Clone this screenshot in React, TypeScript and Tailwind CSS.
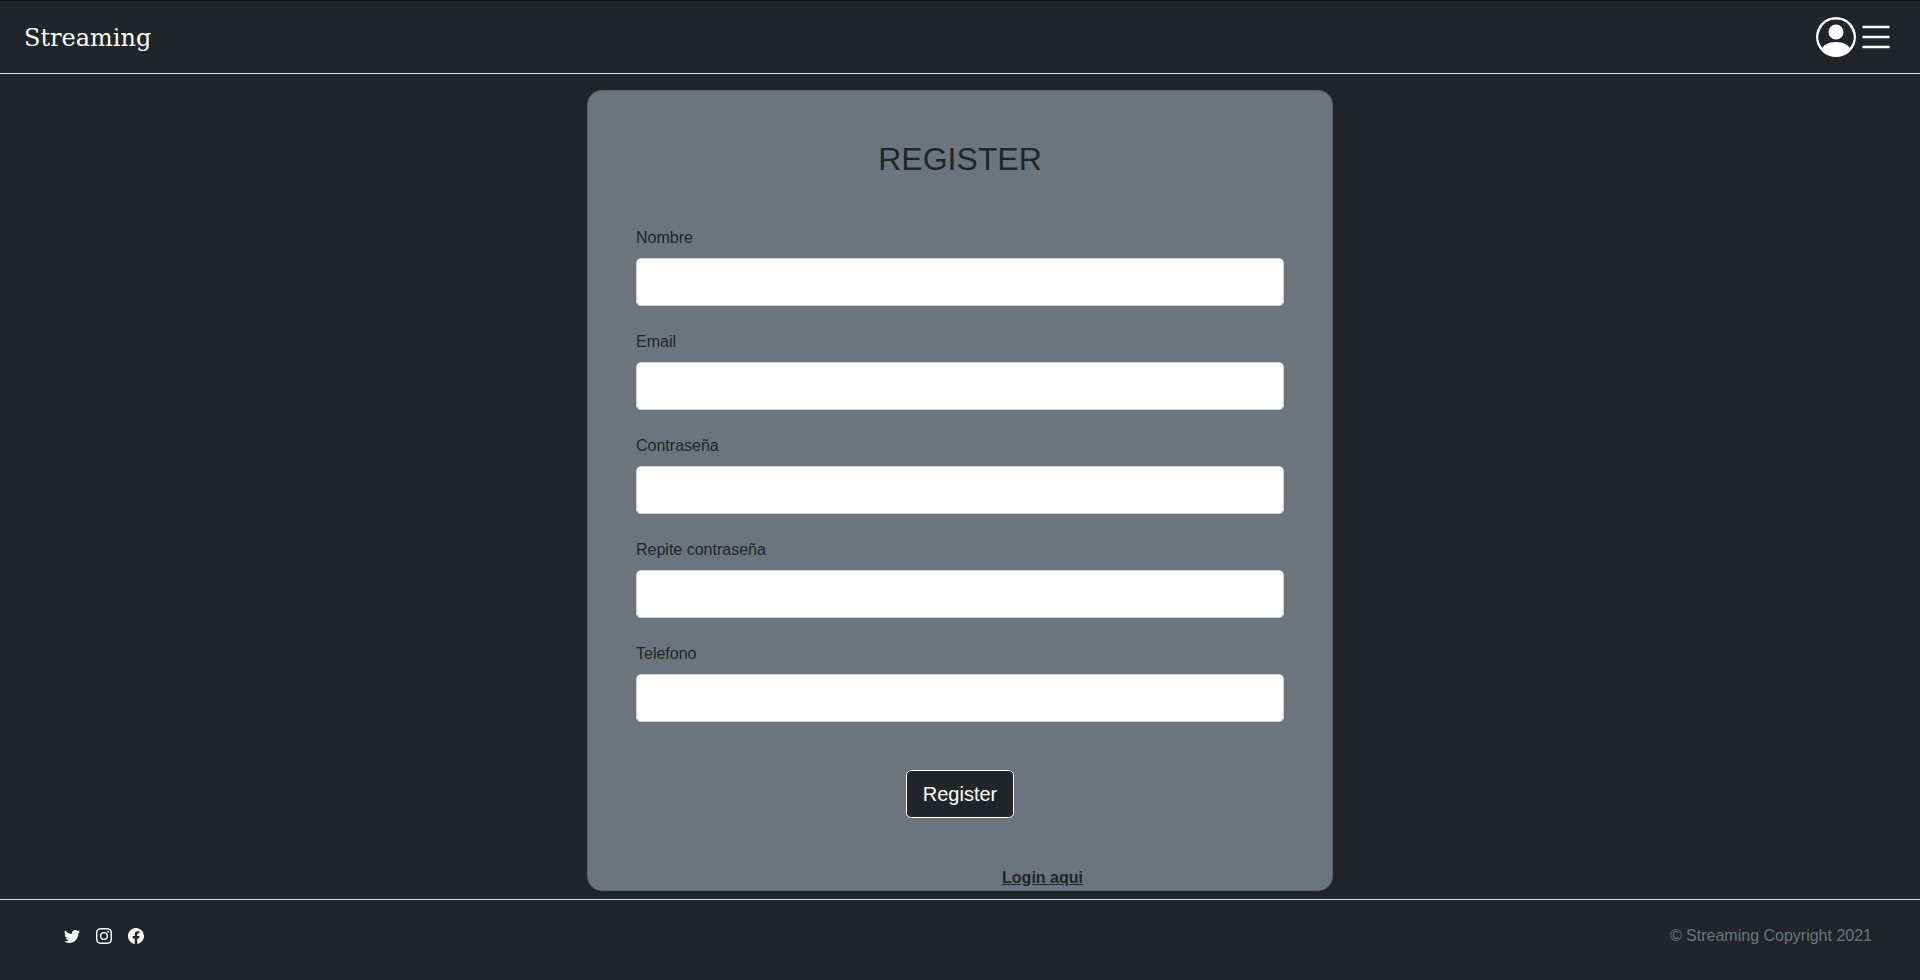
import React from "react";
import { BsFacebook, BsInstagram, BsList, BsPersonCircle, BsTwitter } from "react-icons/bs";

type Field = { id: string; label: string; type: string };

const fields: Field[] = [
  { id: "nombre", label: "Nombre", type: "text" },
  { id: "email", label: "Email", type: "email" },
  { id: "password", label: "Contraseña", type: "password" },
  { id: "password-repeat", label: "Repite contraseña", type: "password" },
  { id: "telefono", label: "Telefono", type: "tel" },
];

function Header() {
  return (
    <header className="flex items-end justify-between border-t border-t-[#0b0c0e] border-b border-b-[#dee2e6] px-6 py-4">
      <a href="#" className="font-['DejaVu_Serif',serif] text-2xl leading-[38px] text-white">
        Streaming
      </a>
      <nav className="flex text-white">
        <button type="button" aria-label="Usuario">
          <BsPersonCircle className="size-10" />
        </button>
        <button type="button" aria-label="Menu">
          <BsList className="size-10" />
        </button>
      </nav>
    </header>
  );
}

function RegisterCard() {
  return (
    <form className="flex w-full max-w-[746px] flex-col rounded-[15px] border border-black/15 bg-[#6c757d] px-12 pt-12 text-[#212529]">
      <h2 className="mb-[47px] text-center text-[32px] leading-10">REGISTER</h2>
      <div className="flex flex-col gap-6">
        {fields.map((field) => (
          <div key={field.id} className="flex flex-col gap-2">
            <label htmlFor={field.id}>{field.label}</label>
            <input
              id={field.id}
              type={field.type}
              className="h-12 w-full rounded-[5px] border border-[#ced4da] bg-white px-4 text-xl outline-none"
            />
          </div>
        ))}
      </div>
      <button
        type="submit"
        className="my-12 h-12 self-center rounded-[5px] border border-white bg-[#212529] px-4 text-xl text-white"
      >
        Register
      </button>
      <p className="pl-[165px] text-center">
        <a href="#" className="font-bold underline">
          Login aqui
        </a>
      </p>
    </form>
  );
}

function Footer() {
  return (
    <footer className="flex items-center justify-between border-t border-[#dee2e6] px-12 pt-6 pb-8">
      <div className="flex gap-4 pl-4 text-white">
        <a href="#" aria-label="Twitter">
          <BsTwitter className="size-4" />
        </a>
        <a href="#" aria-label="Instagram">
          <BsInstagram className="size-4" />
        </a>
        <a href="#" aria-label="Facebook">
          <BsFacebook className="size-4" />
        </a>
      </div>
      <p className="text-[#6c757d]">© Streaming Copyright 2021</p>
    </footer>
  );
}

export default function App() {
  return (
    <div className="flex min-h-screen flex-col bg-[#212529] font-['Liberation_Sans',Arial,sans-serif] text-base">
      <Header />
      <main className="flex justify-center pt-4 pb-2">
        <RegisterCard />
      </main>
      <Footer />
    </div>
  );
}
